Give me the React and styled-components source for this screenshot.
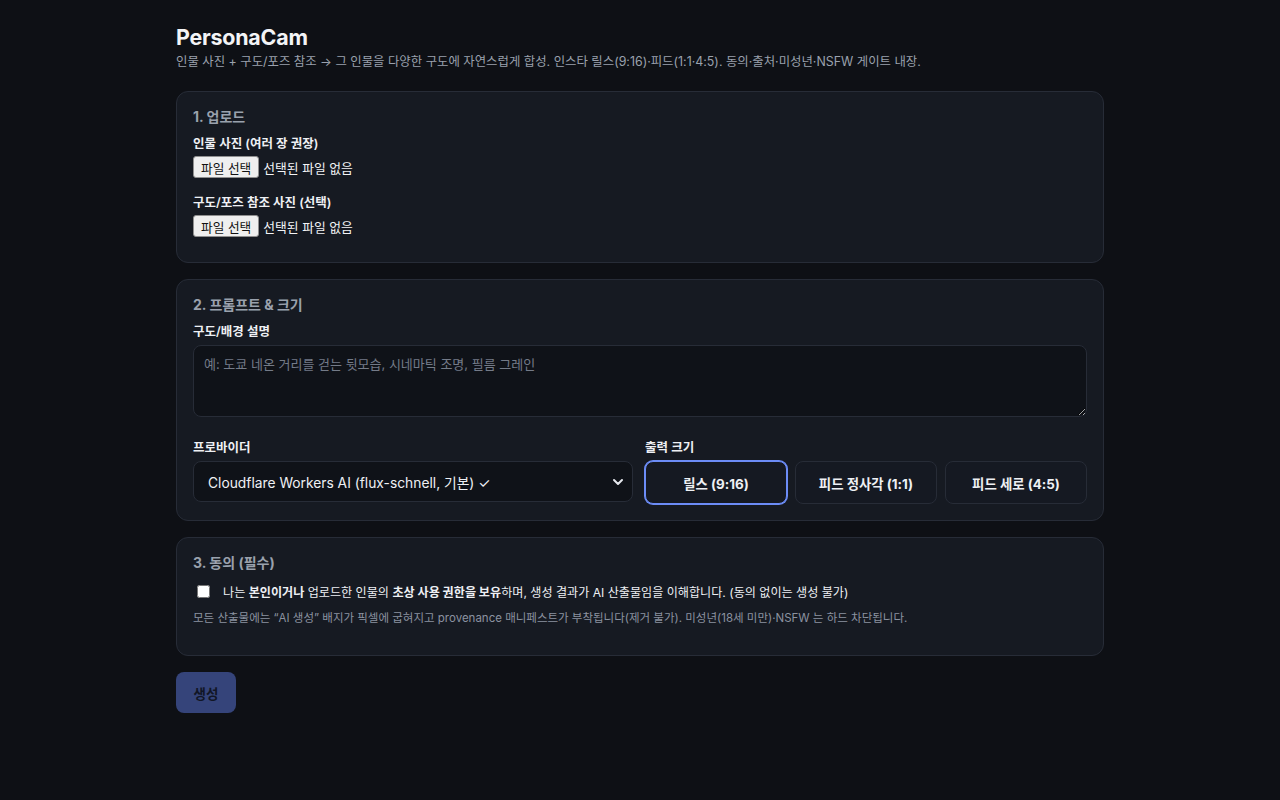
import React, { useState } from "react";
import styled, { createGlobalStyle } from "styled-components";

const Global = createGlobalStyle`
  html, body { margin: 0; padding: 0; background: #0e1015; }
  body {
    font-family: Inter, "Noto Sans CJK KR", "Noto Sans", sans-serif;
    color: #e6e8ee;
    -webkit-font-smoothing: antialiased;
  }
  * { box-sizing: border-box; }
`;

const Page = styled.main`
  max-width: 928px;
  margin: 0 auto;
  padding: 24px 0 40px;
`;

const Title = styled.h1`
  margin: 0 0 2px;
  font-size: 21.4px;
  line-height: 26px;
  font-weight: 700;
  color: #f3f4f6;
  letter-spacing: -0.2px;
`;

const Subtitle = styled.p`
  margin: 0 0 19px;
  font-size: 12.4px;
  line-height: 20px;
  color: #9aa1ad;
`;

const Card = styled.section`
  background: #161a22;
  border: 1px solid #272c37;
  border-radius: 12px;
  padding: 16px 16px ${(p) => p.$pb || 16}px;
  margin-bottom: 16px;
`;

const CardTitle = styled.h2`
  margin: 0 0 10px;
  font-size: 14px;
  line-height: 17px;
  font-weight: 700;
  color: #9aa1ad;
`;

const Field = styled.div`
  display: flex;
  flex-direction: column;
  margin-bottom: ${(p) => p.$mb || 0}px;
`;

const Label = styled.label`
  font-size: 12.5px;
  line-height: 18px;
  font-weight: 600;
  color: #eef0f4;
  margin-bottom: 4px;
`;

const FileRow = styled.div`
  display: flex;
  align-items: center;
  gap: 4px;
  height: 22px;
  margin-top: -1px;
`;

const FileButton = styled.button`
  height: 22px;
  padding: 0 7px;
  background: #efefef;
  border: 1px solid #8f8f8f;
  border-radius: 3px;
  font-family: inherit;
  font-size: 12.7px;
  color: #111;
  cursor: pointer;
`;

const FileText = styled.span`
  font-size: 12.8px;
  color: #f3f4f6;
`;

const TextArea = styled.textarea`
  height: 72px;
  resize: vertical;
  background: #0f1218;
  border: 1px solid #272c37;
  border-radius: 8px;
  padding: 9px 10px;
  font-family: inherit;
  font-size: 13px;
  line-height: 18px;
  color: #e6e8ee;
  margin-bottom: 22px;
  outline: none;
  &::placeholder { color: #747b88; }
`;

const Grid = styled.div`
  display: grid;
  grid-template-columns: 440px 1fr;
  gap: 12px;
`;

const SelectBox = styled.div`
  height: 41px;
  display: flex;
  align-items: center;
  justify-content: space-between;
  background: #0f1218;
  border: 1px solid #272c37;
  border-radius: 8px;
  padding: 0 6px 0 14px;
  font-size: 13.8px;
  color: #eef0f4;
  cursor: pointer;
`;

const SizeRow = styled.div`
  display: flex;
  gap: 8px;
`;

const SizeButton = styled.button`
  flex: 1;
  height: 43px;
  background: #151922;
  border: 1px solid ${(p) => (p.$active ? "#6c8cf6" : "#272c37")};
  box-shadow: ${(p) => (p.$active ? "0 0 0 1px #6c8cf6" : "none")};
  border-radius: 8px;
  font-family: inherit;
  font-size: 13.4px;
  font-weight: 700;
  color: #eef0f4;
  cursor: pointer;
`;

const ConsentRow = styled.label`
  display: flex;
  align-items: center;
  height: 20px;
  font-size: 12.1px;
  color: #eef0f4;
  padding-left: 4px;
  gap: 13px;
  b { font-weight: 700; }
`;

const Check = styled.input`
  width: 13px;
  height: 13px;
  margin: 0;
`;

const Note = styled.p`
  margin: 8px 0 12px;
  font-size: 11.5px;
  line-height: 18px;
  color: #8b92a0;
`;

const Generate = styled.button`
  width: 60px;
  height: 41px;
  border: none;
  border-radius: 8px;
  background: #35447a;
  color: #111626;
  font-family: inherit;
  font-size: 13.5px;
  font-weight: 700;
  cursor: not-allowed;
`;

const Chevron = () => (
  <svg width="16" height="16" viewBox="0 0 24 24" fill="none" stroke="#e6e8ee" strokeWidth="3" strokeLinecap="round" strokeLinejoin="round">
    <path d="M6 9l6 6 6-6" />
  </svg>
);

export default function App() {
  const [size, setSize] = useState("reels");
  const [agree, setAgree] = useState(false);
  const sizes = [
    { id: "reels", label: "릴스 (9:16)" },
    { id: "square", label: "피드 정사각 (1:1)" },
    { id: "portrait", label: "피드 세로 (4:5)" },
  ];
  return (
    <>
      <Global />
      <Page>
        <Title>PersonaCam</Title>
        <Subtitle>
          인물 사진 + 구도/포즈 참조 → 그 인물을 다양한 구도에 자연스럽게 합성. 인스타 릴스(9:16)·피드(1:1·4:5). 동의·출처·미성년·NSFW 게이트 내장.
        </Subtitle>

        <Card $pb={25}>
          <CardTitle>1. 업로드</CardTitle>
          <Field $mb={16}>
            <Label>인물 사진 (여러 장 권장)</Label>
            <FileRow>
              <FileButton>파일 선택</FileButton>
              <FileText>선택된 파일 없음</FileText>
            </FileRow>
          </Field>
          <Field>
            <Label>구도/포즈 참조 사진 (선택)</Label>
            <FileRow>
              <FileButton>파일 선택</FileButton>
              <FileText>선택된 파일 없음</FileText>
            </FileRow>
          </Field>
        </Card>

        <Card>
          <CardTitle>2. 프롬프트 &amp; 크기</CardTitle>
          <Field>
            <Label>구도/배경 설명</Label>
            <TextArea placeholder="예: 도쿄 네온 거리를 걷는 뒷모습, 시네마틱 조명, 필름 그레인" />
          </Field>
          <Grid>
            <Field>
              <Label>프로바이더</Label>
              <SelectBox>
                <span>Cloudflare Workers AI (flux-schnell, 기본) ✓</span>
                <Chevron />
              </SelectBox>
            </Field>
            <Field>
              <Label>출력 크기</Label>
              <SizeRow>
                {sizes.map((s) => (
                  <SizeButton key={s.id} $active={size === s.id} onClick={() => setSize(s.id)}>
                    {s.label}
                  </SizeButton>
                ))}
              </SizeRow>
            </Field>
          </Grid>
        </Card>

        <Card>
          <CardTitle>3. 동의 (필수)</CardTitle>
          <ConsentRow>
            <Check type="checkbox" checked={agree} onChange={(e) => setAgree(e.target.checked)} />
            <span>
              나는 <b>본인이거나</b> 업로드한 인물의 <b>초상 사용 권한을 보유</b>하며, 생성 결과가 AI 산출물임을 이해합니다. (동의 없이는 생성 불가)
            </span>
          </ConsentRow>
          <Note>
            모든 산출물에는 “AI 생성” 배지가 픽셀에 굽혀지고 provenance 매니페스트가 부착됩니다(제거 불가). 미성년(18세 미만)·NSFW 는 하드 차단됩니다.
          </Note>
        </Card>

        <Generate disabled={!agree}>생성</Generate>
      </Page>
    </>
  );
}
